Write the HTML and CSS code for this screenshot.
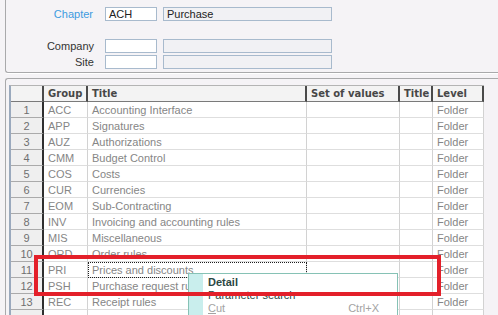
FILE: index.html
```html
<!DOCTYPE html>
<html lang="en">
<head>
    <meta charset="UTF-8">
    <title>Chapter - Purchase</title>
    <link rel="stylesheet" href="styles.css">
</head>
<body>
    <div class="top-panel">
        <div class="field-row chapter-row">
            <span class="lbl link">Chapter</span>
            <div class="box code">ACH</div>
            <div class="box desc">Purchase</div>
        </div>
        <div class="field-row">
            <span class="lbl">Company</span>
            <div class="box code"></div>
            <div class="box desc"></div>
        </div>
        <div class="field-row">
            <span class="lbl">Site</span>
            <div class="box code"></div>
            <div class="box desc"></div>
        </div>
    </div>

    <div class="list-panel">
        <table class="grid">
            <thead>
                <tr>
                    <th class="num"></th>
                    <th class="c-group">Group</th>
                    <th class="c-title">Title</th>
                    <th class="c-set">Set of values</th>
                    <th class="c-title2">Title</th>
                    <th class="c-level">Level</th>
                </tr>
            </thead>
            <tbody>
                <tr><td class="num">1</td><td>ACC</td><td>Accounting Interface</td><td></td><td></td><td>Folder</td></tr>
                <tr><td class="num">2</td><td>APP</td><td>Signatures</td><td></td><td></td><td>Folder</td></tr>
                <tr><td class="num">3</td><td>AUZ</td><td>Authorizations</td><td></td><td></td><td>Folder</td></tr>
                <tr><td class="num">4</td><td>CMM</td><td>Budget Control</td><td></td><td></td><td>Folder</td></tr>
                <tr><td class="num">5</td><td>COS</td><td>Costs</td><td></td><td></td><td>Folder</td></tr>
                <tr><td class="num">6</td><td>CUR</td><td>Currencies</td><td></td><td></td><td>Folder</td></tr>
                <tr><td class="num">7</td><td>EOM</td><td>Sub-Contracting</td><td></td><td></td><td>Folder</td></tr>
                <tr><td class="num">8</td><td>INV</td><td>Invoicing and accounting rules</td><td></td><td></td><td>Folder</td></tr>
                <tr><td class="num">9</td><td>MIS</td><td>Miscellaneous</td><td></td><td></td><td>Folder</td></tr>
                <tr><td class="num">10</td><td>ORD</td><td>Order rules</td><td></td><td></td><td>Folder</td></tr>
                <tr><td class="num">11</td><td>PRI</td><td class="focus">Prices and discounts</td><td></td><td></td><td>Folder</td></tr>
                <tr><td class="num">12</td><td>PSH</td><td>Purchase request rules</td><td></td><td></td><td>Folder</td></tr>
                <tr><td class="num">13</td><td>REC</td><td>Receipt rules</td><td></td><td></td><td>Folder</td></tr>
                <tr><td class="num"></td><td></td><td></td><td></td><td></td><td></td></tr>
            </tbody>
        </table>

        <!-- right-click menu over the grid -->
        <div class="context-menu">
            <div class="menu-item bold">Detail</div>
            <div class="menu-item">Parameter search</div>
            <div class="menu-item disabled"><span><u>C</u>ut</span><span class="shortcut">Ctrl+X</span></div>
        </div>

        <!-- annotation frame -->
        <div class="highlight"></div>
    </div>
</body>
</html>
```

FILE: styles.css
```css
html, body {
    height: 315px;
    overflow: hidden;
}
body {
    margin: 0;
    background-color: #f5f3f6;
    font-family: "Liberation Sans", Arial, sans-serif;
    font-size: 11px;
    color: #333;
    position: relative;
}
.top-panel {
    margin-left: 5px;
    height: 73px;
    box-sizing: border-box;
    padding-top: 7px;
    border-left: 1px solid #a9a9ab;
    border-bottom: 1px solid #a9a9ab;
    border-bottom-left-radius: 3px;
    box-shadow: 0 1px 0 #ffffff;
}
.field-row {
    display: grid;
    grid-template-columns: 93px 52px 169px;
    column-gap: 6px;
    align-items: center;
    height: 14px;
    margin-bottom: 2px;
}
.chapter-row {
    margin-bottom: 18px;
}
.lbl {
    text-align: right;
    padding-right: 5px;
    color: #333;
}
.lbl.link {
    color: #3d9be0;
    padding-right: 6px;
}
.box {
    height: 14px;
    box-sizing: border-box;
    border: 1px solid #a8bacd;
    padding-left: 3px;
    line-height: 12px;
    color: #222;
}
.box.code {
    background-color: #ffffff;
}
.box.desc {
    background-color: #f1f1f4;
}

.list-panel {
    margin-top: 5px;
    margin-left: 5px;
    height: 240px;
    padding-top: 6px;
    padding-left: 3px;
    border-top: 1px solid #a9a9ab;
    border-left: 1px solid #a9a9ab;
    border-top-left-radius: 3px;
}
.grid {
    table-layout: fixed;
    border-collapse: separate;
    border-spacing: 0;
    width: 475px;
    border-left: 2px solid #9aa9bd;
    border-top: 1px solid #b4b4b4;
}
.grid th,
.grid td {
    box-sizing: border-box;
    height: 16px;
    padding: 0 0 0 4px;
    white-space: nowrap;
    overflow: hidden;
}
.grid th {
    background-color: #f3f3f3;
    font-family: "DejaVu Sans", Verdana, sans-serif;
    font-size: 10px;
    font-weight: bold;
    color: #474747;
    text-align: left;
    border-right: 2px solid #4a4a4a;
    border-bottom: 1px solid #7a7a7a;
}
.grid th.num { width: 33px; }
.grid th.c-group { width: 44px; }
.grid th.c-title { width: 219px; }
.grid th.c-set { width: 93px; }
.grid th.c-title2 { width: 33px; }
.grid th.c-level { width: 51px; }

.grid td {
    background-color: #ffffff;
    color: #868686;
    border-right: 1px solid #d2d2d2;
    border-bottom: 1px solid #dedede;
}
.grid td.num {
    background-color: #efefef;
    color: #6f6f6f;
    text-align: center;
    padding: 0;
    border-right: 2px solid #2f2f2f;
    border-bottom: 1px solid #aaaaaa;
}
.grid td.focus {
    outline: 1px dotted #1e1e1e;
    outline-offset: -1px;
}

.context-menu {
    position: absolute;
    left: 188px;
    top: 273px;
    width: 210px;
    height: 60px;
    box-sizing: border-box;
    padding: 2px 0 0 19px;
    background-color: #ffffff;
    border: 1px solid #86c2b5;
    background-image: linear-gradient(to right, #c9eeed 14px, #ffffff 14px);
    color: #2c4743;
}
.menu-item {
    height: 13px;
    line-height: 13px;
    display: flex;
    justify-content: space-between;
    padding-right: 18px;
}
.menu-item.bold {
    font-weight: bold;
}
.menu-item.disabled {
    color: #a3a3a3;
}

.highlight {
    position: absolute;
    left: 34px;
    top: 255px;
    width: 407px;
    height: 41px;
    box-sizing: border-box;
    border: 4px solid #e3202a;
}
```
